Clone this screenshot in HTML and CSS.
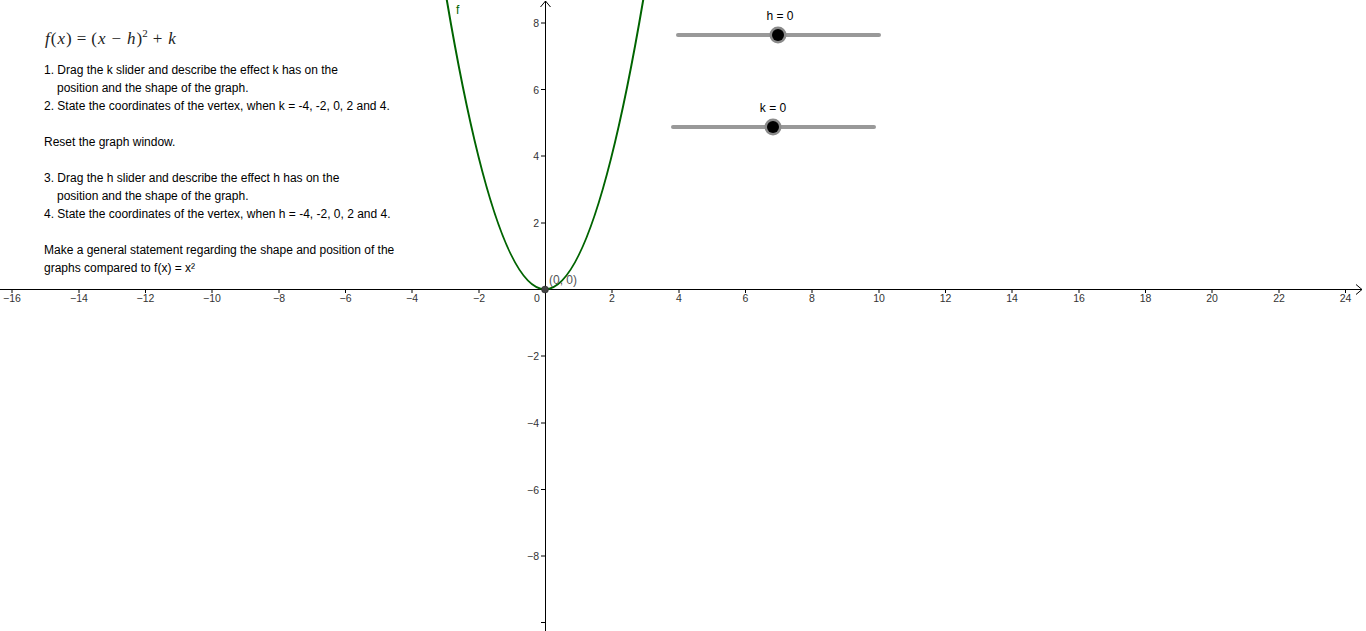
FILE: index.html
```html
<!DOCTYPE html>
<html>
<head>
<meta charset="utf-8">
<link rel="stylesheet" href="styles.css">
</head>
<body>
<div class="applet">
  <svg class="graph" width="1366" height="631" viewBox="0 0 1366 631" xmlns="http://www.w3.org/2000/svg">
    <g class="axes" stroke="#000" stroke-width="1" fill="none">
      <line x1="0" y1="289.5" x2="1362" y2="289.5"/>
      <polyline points="1356,284.5 1362,289.5 1356,294.5"/>
      <line x1="545.5" y1="1" x2="545.5" y2="631"/>
      <polyline points="540.5,7 545.5,1 550.5,7"/>
    </g>
    <g class="ticks" stroke="#000" stroke-width="1">
      <line x1="12" y1="289" x2="12" y2="293"/>
      <line x1="79" y1="289" x2="79" y2="293"/>
      <line x1="145.5" y1="289" x2="145.5" y2="293"/>
      <line x1="212" y1="289" x2="212" y2="293"/>
      <line x1="279" y1="289" x2="279" y2="293"/>
      <line x1="345.5" y1="289" x2="345.5" y2="293"/>
      <line x1="412" y1="289" x2="412" y2="293"/>
      <line x1="479" y1="289" x2="479" y2="293"/>
      <line x1="612" y1="289" x2="612" y2="293"/>
      <line x1="679" y1="289" x2="679" y2="293"/>
      <line x1="745.5" y1="289" x2="745.5" y2="293"/>
      <line x1="812" y1="289" x2="812" y2="293"/>
      <line x1="879" y1="289" x2="879" y2="293"/>
      <line x1="945.5" y1="289" x2="945.5" y2="293"/>
      <line x1="1012" y1="289" x2="1012" y2="293"/>
      <line x1="1079" y1="289" x2="1079" y2="293"/>
      <line x1="1145.5" y1="289" x2="1145.5" y2="293"/>
      <line x1="1212" y1="289" x2="1212" y2="293"/>
      <line x1="1279" y1="289" x2="1279" y2="293"/>
      <line x1="1345.5" y1="289" x2="1345.5" y2="293"/>
      <line x1="541" y1="23" x2="545" y2="23"/>
      <line x1="541" y1="89.5" x2="545" y2="89.5"/>
      <line x1="541" y1="156" x2="545" y2="156"/>
      <line x1="541" y1="223" x2="545" y2="223"/>
      <line x1="541" y1="356" x2="545" y2="356"/>
      <line x1="541" y1="423" x2="545" y2="423"/>
      <line x1="541" y1="489.5" x2="545" y2="489.5"/>
      <line x1="541" y1="556" x2="545" y2="556"/>
      <line x1="541" y1="622.5" x2="545" y2="622.5"/>
    </g>
    <g class="xlabels" text-anchor="middle">
      <text x="12" y="302">−16</text>
      <text x="79" y="302">−14</text>
      <text x="145.5" y="302">−12</text>
      <text x="212" y="302">−10</text>
      <text x="279" y="302">−8</text>
      <text x="345.5" y="302">−6</text>
      <text x="412" y="302">−4</text>
      <text x="479" y="302">−2</text>
      <text x="537" y="302">0</text>
      <text x="612" y="302">2</text>
      <text x="679" y="302">4</text>
      <text x="745.5" y="302">6</text>
      <text x="812" y="302">8</text>
      <text x="879" y="302">10</text>
      <text x="945.5" y="302">12</text>
      <text x="1012" y="302">14</text>
      <text x="1079" y="302">16</text>
      <text x="1145.5" y="302">18</text>
      <text x="1212" y="302">20</text>
      <text x="1279" y="302">22</text>
      <text x="1345.5" y="302">24</text>
    </g>
    <g class="ylabels" text-anchor="end">
      <text x="539" y="27">8</text>
      <text x="539" y="93.5">6</text>
      <text x="539" y="160">4</text>
      <text x="539" y="227">2</text>
      <text x="539" y="360">−2</text>
      <text x="539" y="427">−4</text>
      <text x="539" y="493.5">−6</text>
      <text x="539" y="560">−8</text>
    </g>
    <path class="curve" d="M445,-10.7 Q545,589.3 645,-10.7" fill="none" stroke="#006400" stroke-width="2"/>
    <text class="flabel" x="456" y="14">f</text>
    <circle cx="545" cy="289.5" r="3.5" fill="#444" stroke="#222" stroke-width="0.5"/>
    <text class="plabel" x="549" y="284">(0, 0)</text>

    <g class="slider">
      <line x1="678" y1="35" x2="879" y2="35" stroke="#999" stroke-width="4" stroke-linecap="round"/>
      <circle cx="778" cy="35" r="8.5" fill="#8a8a8a"/>
      <circle cx="778" cy="35" r="6" fill="#000"/>
      <text class="slabel" x="780" y="20" text-anchor="middle">h = 0</text>
    </g>
    <g class="slider">
      <line x1="673" y1="127" x2="874" y2="127" stroke="#999" stroke-width="4" stroke-linecap="round"/>
      <circle cx="773" cy="127" r="8.5" fill="#8a8a8a"/>
      <circle cx="773" cy="127" r="6" fill="#000"/>
      <text class="slabel" x="773" y="112" text-anchor="middle">k = 0</text>
    </g>
  </svg>

  <div class="panel">
    <div class="formula"><i>f</i>(<i>x</i>)<span class="op">=</span>(<i>x</i><span class="op">−</span><i>h</i>)<sup>2</sup><span class="op">+</span><i>k</i></div>
    <div class="lines">
      <div>1. Drag the k slider and describe the effect k has on the</div>
      <div class="indent">position and the shape of the graph.</div>
      <div>2. State the coordinates of the vertex, when k = -4, -2, 0, 2 and 4.</div>
      <div class="gap"></div>
      <div>Reset the graph window.</div>
      <div class="gap"></div>
      <div>3. Drag the h slider and describe the effect h has on the</div>
      <div class="indent">position and the shape of the graph.</div>
      <div>4. State the coordinates of the vertex, when h = -4, -2, 0, 2 and 4.</div>
      <div class="gap"></div>
      <div>Make a general statement regarding the shape and position of the</div>
      <div>graphs compared to f(x) = x²</div>
    </div>
  </div>
</div>
</body>
</html>
```

FILE: styles.css
```css
html, body {
  margin: 0;
  padding: 0;
  background: #fff;
}
.applet {
  position: relative;
  width: 1366px;
  height: 631px;
  overflow: hidden;
  font-family: "Liberation Sans", Arial, sans-serif;
}
.graph {
  position: absolute;
  left: 0;
  top: 0;
}
.xlabels text, .ylabels text {
  font-family: "Liberation Sans", Arial, sans-serif;
  font-size: 10.5px;
  fill: #333;
}
.flabel {
  font-family: "Liberation Sans", Arial, sans-serif;
  font-size: 12px;
  fill: #006400;
}
.plabel {
  font-family: "Liberation Sans", Arial, sans-serif;
  font-size: 12px;
  fill: #555;
}
.slabel {
  font-family: "Liberation Sans", Arial, sans-serif;
  font-size: 12px;
  fill: #000;
}
.panel {
  position: relative;
  padding: 29px 0 0 44px;
  color: #000;
}
.formula {
  font-family: "Liberation Serif", "DejaVu Serif", serif;
  font-size: 17px;
  line-height: 20px;
  height: 20px;
  color: #222;
}
.formula i {
  font-style: italic;
  padding: 0 1px;
}
.formula .op {
  padding: 0 5px;
}
.formula sup {
  font-size: 11px;
  line-height: 0;
  vertical-align: 7px;
}
.lines {
  margin-top: 12px;
  font-size: 12px;
  line-height: 18px;
}
.indent {
  padding-left: 13px;
}
.gap {
  height: 18px;
}
```
